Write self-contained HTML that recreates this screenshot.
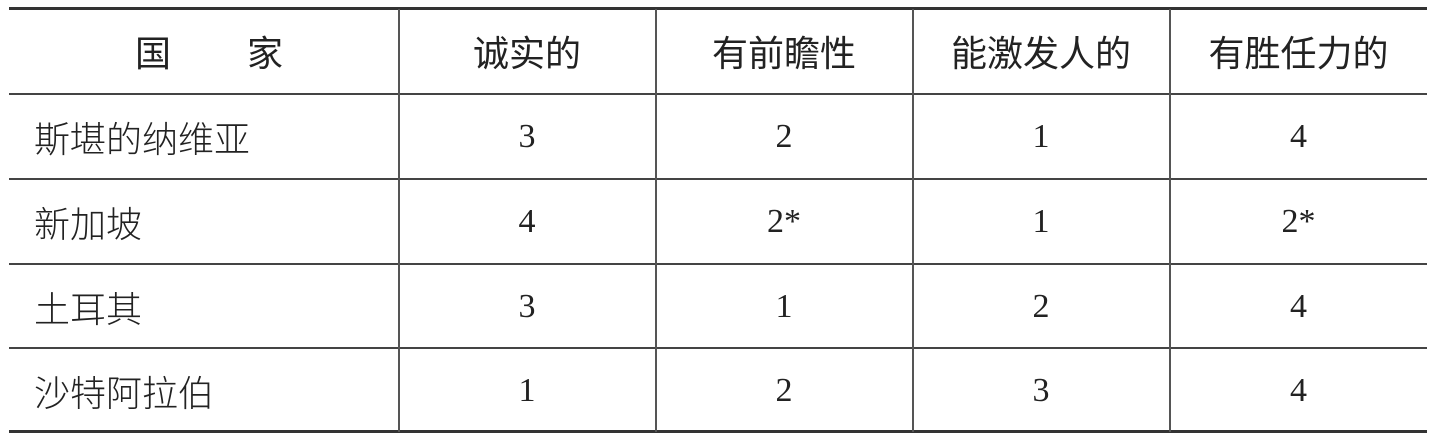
<!DOCTYPE html>
<html><head><meta charset="utf-8"><style>
body{margin:0;background:#fff;width:1432px;height:440px;position:relative;overflow:hidden}
.h{position:absolute;left:9px;width:1418px;background:#333}
.v{position:absolute;width:2px;top:9px;height:423px;background:#555}
.t{position:absolute;font-size:36px;color:#222;line-height:40px;font-weight:300;font-family:"Noto Sans CJK SC","Liberation Sans",sans-serif}
.hd{font-weight:400}
.n{position:absolute;font-size:34px;color:#222;line-height:40px;font-family:"Liberation Serif",serif;text-align:center}
</style></head><body>
<div class="h" style="top:7px;height:3px"></div>
<div class="h" style="top:93px;height:2px;background:#444"></div>
<div class="h" style="top:178px;height:2px;background:#444"></div>
<div class="h" style="top:263px;height:2px;background:#444"></div>
<div class="h" style="top:347px;height:2px;background:#444"></div>
<div class="h" style="top:430px;height:3px"></div>
<div class="v" style="left:398px"></div>
<div class="v" style="left:655px"></div>
<div class="v" style="left:912px"></div>
<div class="v" style="left:1169px"></div>
<div class="t hd" style="left:135px;top:31px">国</div>
<div class="t hd" style="left:247px;top:31px">家</div>
<div class="t hd" style="left:399px;width:256px;top:31px;text-align:center">诚实的</div>
<div class="t hd" style="left:656px;width:256px;top:31px;text-align:center">有前瞻性</div>
<div class="t hd" style="left:913px;width:256px;top:31px;text-align:center">能激发人的</div>
<div class="t hd" style="left:1170px;width:257px;top:31px;text-align:center">有胜任力的</div>
<div class="t" style="left:34px;top:117px">斯堪的纳维亚</div>
<div class="t" style="left:34px;top:202px">新加坡</div>
<div class="t" style="left:34px;top:287px">土耳其</div>
<div class="t" style="left:34px;top:371px">沙特阿拉伯</div>
<div class="n" style="left:399px;width:256px;top:117px">3</div><div class="n" style="left:656px;width:256px;top:117px">2</div><div class="n" style="left:913px;width:256px;top:117px">1</div><div class="n" style="left:1170px;width:257px;top:117px">4</div>
<div class="n" style="left:399px;width:256px;top:202px">4</div><div class="n" style="left:656px;width:256px;top:202px">2*</div><div class="n" style="left:913px;width:256px;top:202px">1</div><div class="n" style="left:1170px;width:257px;top:202px">2*</div>
<div class="n" style="left:399px;width:256px;top:287px">3</div><div class="n" style="left:656px;width:256px;top:287px">1</div><div class="n" style="left:913px;width:256px;top:287px">2</div><div class="n" style="left:1170px;width:257px;top:287px">4</div>
<div class="n" style="left:399px;width:256px;top:371px">1</div><div class="n" style="left:656px;width:256px;top:371px">2</div><div class="n" style="left:913px;width:256px;top:371px">3</div><div class="n" style="left:1170px;width:257px;top:371px">4</div>
</body></html>
